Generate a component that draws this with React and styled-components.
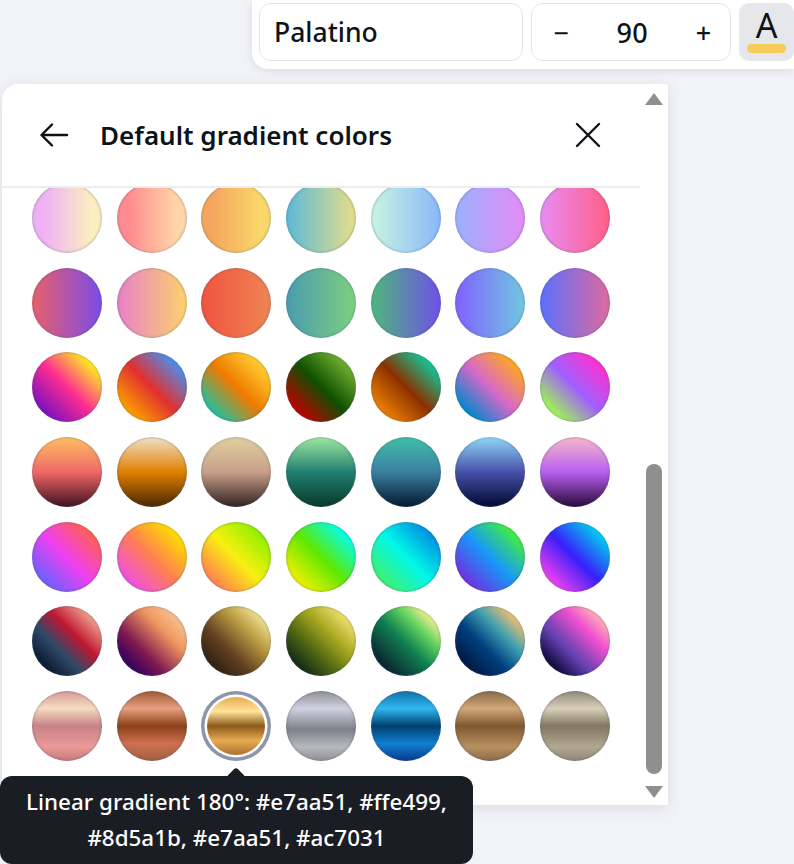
import * as React from "react"
import styled, { createGlobalStyle } from 'styled-components'

const GlobalStyle = createGlobalStyle`
  html, body {
    margin: 0;
    padding: 0;
    background: #f2f3f7;
  }
`

const Page = styled.div`
  position: relative;
  width: 794px;
  height: 864px;
  overflow: hidden;
  background: #f2f3f7;
  font-family: "Noto Sans", sans-serif;
  color: #0e1318;
`

const Toolbar = styled.div`
  display: flex;
  gap: 8px;
  box-sizing: border-box;
  width: 542px;
  height: 69px;
  margin-left: 252px;
  padding: 3px 0 0 7px;
  background: #fff;
  border-radius: 0 0 0 16px;
  box-shadow: 0 2px 8px rgba(64, 87, 109, 0.14);
`

const FontField = styled.div`
  display: flex;
  align-items: center;
  box-sizing: border-box;
  width: 265px;
  height: 58px;
  padding-left: 14px;
  border: 1.5px solid #e3e4e8;
  border-radius: 12px;
  font-size: 26.5px;
  font-weight: 500;
`

const Stepper = styled.div`
  display: flex;
  align-items: center;
  justify-content: space-between;
  box-sizing: border-box;
  width: 200px;
  height: 58px;
  padding: 0 19px 0 21px;
  border: 1.5px solid #e3e4e8;
  border-radius: 12px;
  font-size: 27px;
  font-weight: 500;
`

const StepValue = styled.span`
  letter-spacing: 0.5px;
`

const ColorButton = styled.div`
  display: flex;
  flex-direction: column;
  align-items: center;
  box-sizing: border-box;
  width: 55px;
  height: 58px;
  padding-top: 3px;
  background: #e6e7ea;
  border-radius: 10px;
  font-size: 34px;
  line-height: 38px;
`

const ColorBar = styled.div`
  width: 39px;
  height: 9px;
  border-radius: 5px;
  background: #f6cb5a;
`

const Panel = styled.div`
  display: flex;
  box-sizing: border-box;
  width: 666px;
  height: 721px;
  margin: 15px 0 0 2px;
  background: #fff;
  border-radius: 16px 4px 0 0;
  box-shadow: 0 3px 14px rgba(64, 87, 109, 0.14);
`

const PanelMain = styled.div`
  display: flex;
  flex-direction: column;
  width: 638px;
`

const PanelHeader = styled.div`
  display: flex;
  align-items: center;
  box-sizing: border-box;
  height: 104px;
  padding: 0 39px 0 37px;
  border-bottom: 2px solid #eceded;
`

const HeaderTitle = styled.div`
  flex: 1;
  margin-left: 31px;
  font-size: 26px;
  font-weight: 600;
`

const IconButton = styled.svg`
  display: block;
  flex: none;
  fill: none;
  stroke: #0e1318;
  stroke-width: 2.4;
  stroke-linecap: round;
  stroke-linejoin: round;
`

const SwatchClip = styled.div`
  flex: 1;
  overflow: hidden;
`

const SwatchGrid = styled.div`
  display: grid;
  grid-template-columns: repeat(7, 70px);
  gap: 14.7px;
  margin: -5px 0 0 30px;
`

const Swatch = styled.div`
  position: relative;
  box-sizing: border-box;
  width: 70px;
  height: 70px;
  border-radius: 50%;
  background: ${props => props.$selected ? 'none' : props.$fill};
  box-shadow: ${props => props.$selected
    ? 'inset 0 0 0 3.5px #8c96a8'
    : 'inset 0 0 2px 1px rgba(64, 87, 109, 0.28)'};
  padding: ${props => props.$selected ? '6px' : '0'};
`

const SwatchInner = styled.div`
  width: 100%;
  height: 100%;
  border-radius: 50%;
  background: ${props => props.$fill};
`

const Scrollbar = styled.div`
  display: flex;
  flex-direction: column;
  align-items: center;
  width: 28px;
  height: 100%;
`

const ScrollArrow = styled.div`
  width: 0;
  height: 0;
  margin-top: ${props => props.$up ? '9px' : '12px'};
  margin-bottom: ${props => props.$up ? '0' : '7px'};
  border-left: 9px solid transparent;
  border-right: 9px solid transparent;
  ${props => props.$up
    ? 'border-bottom: 12px solid #8f8f8f;'
    : 'border-top: 12px solid #8f8f8f;'}
`

const ScrollTrack = styled.div`
  flex: 1;
  display: flex;
  align-items: flex-end;
  width: 16px;
`

const ScrollThumb = styled.div`
  width: 16px;
  height: 310px;
  border-radius: 8px;
  background: #8f8f8f;
`

const Tooltip = styled.div`
  position: absolute;
  left: 0;
  top: 776px;
  box-sizing: border-box;
  width: 473px;
  height: 88px;
  padding-top: 8px;
  background: #1a1d24;
  border-radius: 12px;
  color: #fff;
  font-size: 22.4px;
  font-weight: 500;
  line-height: 36px;
  text-align: center;

  &::before {
    content: "";
    position: absolute;
    left: 229px;
    top: -6px;
    width: 14px;
    height: 14px;
    background: #1a1d24;
    border-radius: 3px;
    transform: rotate(45deg);
  }
`

const swatches = [
  'linear-gradient(90deg, #efb0f6 15%, #fbeec0 85%)',
  'linear-gradient(90deg, #ff8a8f 15%, #ffd6a8 85%)',
  'linear-gradient(90deg, #f4a55e 15%, #fad76b 85%)',
  'linear-gradient(90deg, #5bb9d8, #e8de88)',
  'linear-gradient(90deg, #c8f5df, #8ab8f8)',
  'linear-gradient(90deg, #9cb0ff, #e48cf5)',
  'linear-gradient(90deg, #e88cf5, #ff5f85)',

  'linear-gradient(90deg, #e8606b, #7a4ce8)',
  'linear-gradient(90deg, #e87fc8, #fdd36c)',
  'linear-gradient(90deg, #f0533f, #ee8553)',
  'linear-gradient(90deg, #4a9bb0, #7ed07f)',
  'linear-gradient(90deg, #4fb87c, #6e50e8)',
  'linear-gradient(90deg, #8060ff, #70c8e0)',
  'linear-gradient(90deg, #5a70ff, #e06a9c)',

  'linear-gradient(45deg, #7b10c0 15%, #ff2d90 50%, #fdf020 85%)',
  'linear-gradient(45deg, #fda000 15%, #e03030 50%, #4a90f0 85%)',
  'linear-gradient(45deg, #20c0a0 15%, #ee7a00 50%, #ffd030 85%)',
  'linear-gradient(45deg, #c00000 15%, #0f5000 50%, #70b030 85%)',
  'linear-gradient(45deg, #ee8000 15%, #8a3000 50%, #10c898 85%)',
  'linear-gradient(45deg, #0088cc 15%, #d868c8 50%, #ffa820 85%)',
  'linear-gradient(45deg, #a0f850 15%, #a060ff 50%, #ff30d0 85%)',

  'linear-gradient(180deg, #fdc060, #f06868, #401020)',
  'linear-gradient(180deg, #f0e0c8, #e08000, #4a2500)',
  'linear-gradient(180deg, #e0d0a0, #c8a088, #302020)',
  'linear-gradient(180deg, #a0e8a0, #208070, #083828)',
  'linear-gradient(180deg, #40c0a8, #3a80a0, #041830)',
  'linear-gradient(180deg, #90d8f8, #4850a8, #000830)',
  'linear-gradient(180deg, #f8b8c8, #b860f0, #280838)',

  'linear-gradient(45deg, #6a60ff 15%, #f040f0 50%, #ff6050 85%)',
  'linear-gradient(45deg, #f050e0 15%, #ff8050 50%, #ffe000 85%)',
  'linear-gradient(45deg, #ff8050 15%, #f8f010 50%, #90f000 85%)',
  'linear-gradient(45deg, #f0f000 15%, #60e800 50%, #00fff0 85%)',
  'linear-gradient(45deg, #40f070 15%, #00f8e8 50%, #0090e0 85%)',
  'linear-gradient(45deg, #7030e0 15%, #1898f8 50%, #40f040 85%)',
  'linear-gradient(45deg, #f040f0 15%, #3820f8 50%, #00d0f0 85%)',

  'linear-gradient(45deg, #0a1830 15%, #304868 38%, #c01830 60%, #f0a090 85%)',
  'linear-gradient(45deg, #300060 15%, #801850 36%, #f09860 66%, #f8c090 85%)',
  'linear-gradient(45deg, #302010 15%, #604020 38%, #b89840 64%, #f0e090 85%)',
  'linear-gradient(45deg, #102818 15%, #506810 38%, #a8a820 62%, #f0e070 85%)',
  'linear-gradient(45deg, #0a2030 15%, #108050 48%, #60d060 68%, #f0f090 85%)',
  'linear-gradient(45deg, #001840 15%, #004080 42%, #40a0b0 64%, #f0c070 85%)',
  'linear-gradient(45deg, #100838 15%, #6040b0 38%, #f050d0 66%, #ffb0b8 85%)',

  'linear-gradient(180deg, #d89a98, #f5dcc0 25%, #c98288 50%, #eb9a98 80%, #c47a7a)',
  'linear-gradient(180deg, #a05a38, #e8a080 25%, #8a4018 50%, #d07050 75%, #a06040)',
  'linear-gradient(180deg, #e7aa51, #ffe499 25%, #8d5a1b 50%, #e7aa51 75%, #ac7031)',
  'linear-gradient(180deg, #909098, #d0d0e0 25%, #808088 55%, #b8b8c0 80%, #909090)',
  'linear-gradient(180deg, #1070a8, #30b8f0 25%, #004070 50%, #1080d0 75%, #0a3890)',
  'linear-gradient(180deg, #8a6a48, #d0a878 25%, #805830 50%, #b89060 80%, #8a6a48)',
  'linear-gradient(180deg, #908878, #d8d0b8 25%, #807860 50%, #b0a890 80%, #908878)',
]

const SELECTED = 44

export default function App() {
  return (
    <Page>
      <GlobalStyle />
      <Toolbar>
        <FontField>Palatino</FontField>
        <Stepper>
          <span>−</span>
          <StepValue>90</StepValue>
          <span>+</span>
        </Stepper>
        <ColorButton>
          A
          <ColorBar />
        </ColorButton>
      </Toolbar>

      <Panel>
        <PanelMain>
          <PanelHeader>
            <IconButton width="30" height="24" viewBox="0 0 30 24">
              <path d="M13 1.5 2.5 12 13 22.5M3 12h25" />
            </IconButton>
            <HeaderTitle>Default gradient colors</HeaderTitle>
            <IconButton width="26" height="26" viewBox="0 0 26 26">
              <path d="M2 2l22 22M24 2 2 24" />
            </IconButton>
          </PanelHeader>
          <SwatchClip>
            <SwatchGrid>
              {swatches.map((fill, i) => (
                i === SELECTED
                  ? <Swatch key={i} $selected><SwatchInner $fill={fill} /></Swatch>
                  : <Swatch key={i} $fill={fill} />
              ))}
            </SwatchGrid>
          </SwatchClip>
        </PanelMain>
        <Scrollbar>
          <ScrollArrow $up />
          <ScrollTrack>
            <ScrollThumb />
          </ScrollTrack>
          <ScrollArrow />
        </Scrollbar>
      </Panel>

      <Tooltip>
        Linear gradient 180°: #e7aa51, #ffe499,<br />
        #8d5a1b, #e7aa51, #ac7031
      </Tooltip>
    </Page>
  );
}
